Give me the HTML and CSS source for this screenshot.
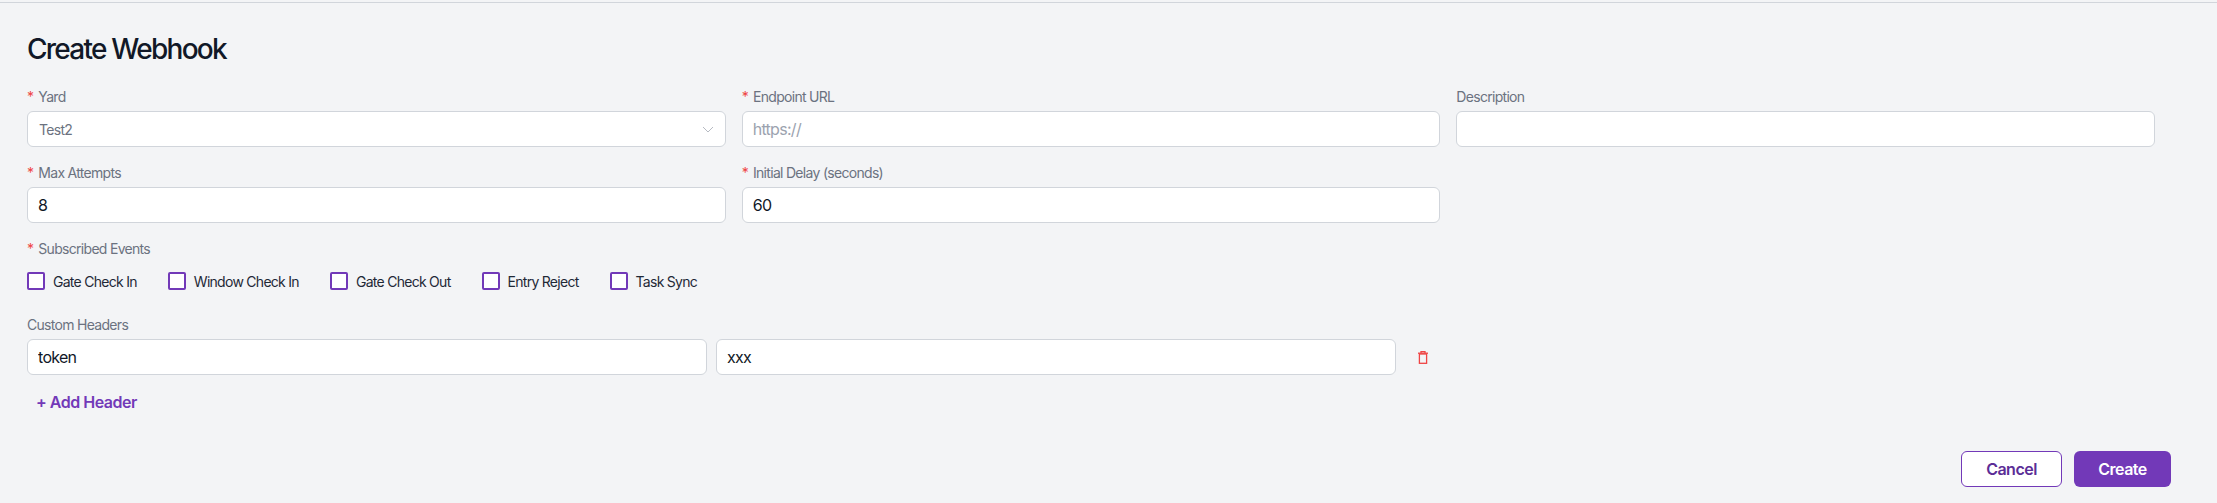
FILE: index.html
```html
<!DOCTYPE html>
<html lang="en">

<head>
    <meta charset="UTF-8">
    <title>Create Webhook</title>
    <link rel="stylesheet" href="styles.css">
</head>

<body>
    <div class="topbar"></div>

    <main class="page">
        <h1 class="title">Create Webhook</h1>

        <form class="form">
            <div class="field-grid">
                <div class="field">
                    <label class="label"><span class="req">*</span>Yard</label>
                    <div class="select">
                        <span>Test2</span>
                        <svg class="chevron" width="12" height="7" viewBox="0 0 12 7" fill="none">
                            <path d="M1 1l5 5 5-5" stroke="#b6bac2" stroke-width="1"/>
                        </svg>
                    </div>
                </div>
                <div class="field">
                    <label class="label"><span class="req">*</span>Endpoint URL</label>
                    <input class="input" type="text" placeholder="https://">
                </div>
                <div class="field">
                    <label class="label">Description</label>
                    <input class="input" type="text">
                </div>
                <div class="field">
                    <label class="label"><span class="req">*</span>Max Attempts</label>
                    <input class="input" type="text" value="8">
                </div>
                <div class="field">
                    <label class="label"><span class="req">*</span>Initial Delay (seconds)</label>
                    <input class="input" type="text" value="60">
                </div>
            </div>

            <div class="events">
                <label class="label"><span class="req">*</span>Subscribed Events</label>
                <div class="event-list">
                    <label class="event"><input class="check" type="checkbox">Gate Check In</label>
                    <label class="event"><input class="check" type="checkbox">Window Check In</label>
                    <label class="event"><input class="check" type="checkbox">Gate Check Out</label>
                    <label class="event"><input class="check" type="checkbox">Entry Reject</label>
                    <label class="event"><input class="check" type="checkbox">Task Sync</label>
                </div>
            </div>

            <div class="headers">
                <label class="label">Custom Headers</label>
                <div class="header-row">
                    <input class="input" type="text" value="token">
                    <input class="input" type="text" value="xxx">
                    <button class="trash" type="button" aria-label="Delete header">
                        <svg width="10" height="13" viewBox="0 0 10 13" fill="none" stroke="#ef4444" stroke-width="1.3">
                            <path d="M0 2.2h10"/>
                            <path d="M3 2V.7h4V2"/>
                            <rect x="1.4" y="3" width="7.2" height="9.3"/>
                        </svg>
                    </button>
                </div>
                <button class="add-header" type="button">+ Add Header</button>
            </div>

            <div class="actions">
                <button class="btn btn-cancel" type="button">Cancel</button>
                <button class="btn btn-create" type="button">Create</button>
            </div>
        </form>
    </main>
</body>

</html>
```

FILE: styles.css
```css
* {
    box-sizing: border-box;
}

body {
    margin: 0;
    background-color: #f3f4f6;
    color: #111827;
    font-family: Inter, "Liberation Sans", sans-serif;
}

.topbar {
    height: 3px;
    border-bottom: 1px solid #d1d5db;
}

.page {
    padding: 28px 46px 0 27px;
}

.title {
    margin: 0 0 20px;
    font-size: 28px;
    line-height: 36px;
    font-weight: 500;
    letter-spacing: -1.75px;
}

.field-grid {
    display: grid;
    grid-template-columns: repeat(3, 1fr);
    gap: 16px 16px;
    margin-right: 16px;
}

.label {
    display: block;
    margin-bottom: 4px;
    font-size: 14px;
    line-height: 20px;
    color: #6b7280;
    letter-spacing: -0.7px;
}

.req {
    margin-right: 5px;
    color: #ef4444;
}

.input,
.select {
    display: block;
    width: 100%;
    height: 36px;
    padding: 0 10px;
    border: 1px solid #d1d5db;
    border-radius: 6px;
    background-color: #fff;
    font-family: inherit;
    font-size: 16px;
    letter-spacing: -0.7px;
    color: #111827;
    outline: none;
}

.input::placeholder {
    color: #9ca3af;
}

.select {
    display: flex;
    align-items: center;
    justify-content: space-between;
    padding: 0 11px;
    font-size: 14px;
    color: #6b7280;
}

.events {
    margin-top: 16px;
}

.event-list {
    display: flex;
    gap: 31px;
    margin-top: 13px;
}

.event {
    display: flex;
    align-items: center;
    gap: 8px;
    height: 18px;
    font-size: 14px;
    letter-spacing: -0.72px;
    color: #1f2937;
}

.check {
    appearance: none;
    width: 18px;
    height: 18px;
    margin: 0;
    border: 2px solid #7239b8;
    border-radius: 2px;
    background-color: #fff;
}

.headers {
    margin-top: 25px;
}

.header-row {
    display: flex;
    gap: 9px;
    align-items: center;
}

.header-row .input {
    width: 680px;
}

.trash {
    padding: 0 13px;
    border: 0;
    background: none;
    line-height: 0;
}

.add-header {
    display: block;
    height: 32px;
    margin-top: 11px;
    padding: 0 9px;
    border: 0;
    background: none;
    font-family: inherit;
    font-size: 16px;
    font-weight: 600;
    letter-spacing: -0.5px;
    color: #7239b8;
}

.actions {
    display: flex;
    justify-content: flex-end;
    gap: 12px;
    margin-top: 33px;
}

.btn {
    height: 36px;
    border-radius: 6px;
    font-family: inherit;
    font-size: 16px;
    font-weight: 600;
    letter-spacing: -0.5px;
}

.btn-cancel {
    width: 101px;
    border: 1px solid #7239b8;
    background-color: #fff;
    color: #5b2d96;
}

.btn-create {
    width: 97px;
    border: 0;
    background-color: #7239b8;
    color: #fff;
}
```
